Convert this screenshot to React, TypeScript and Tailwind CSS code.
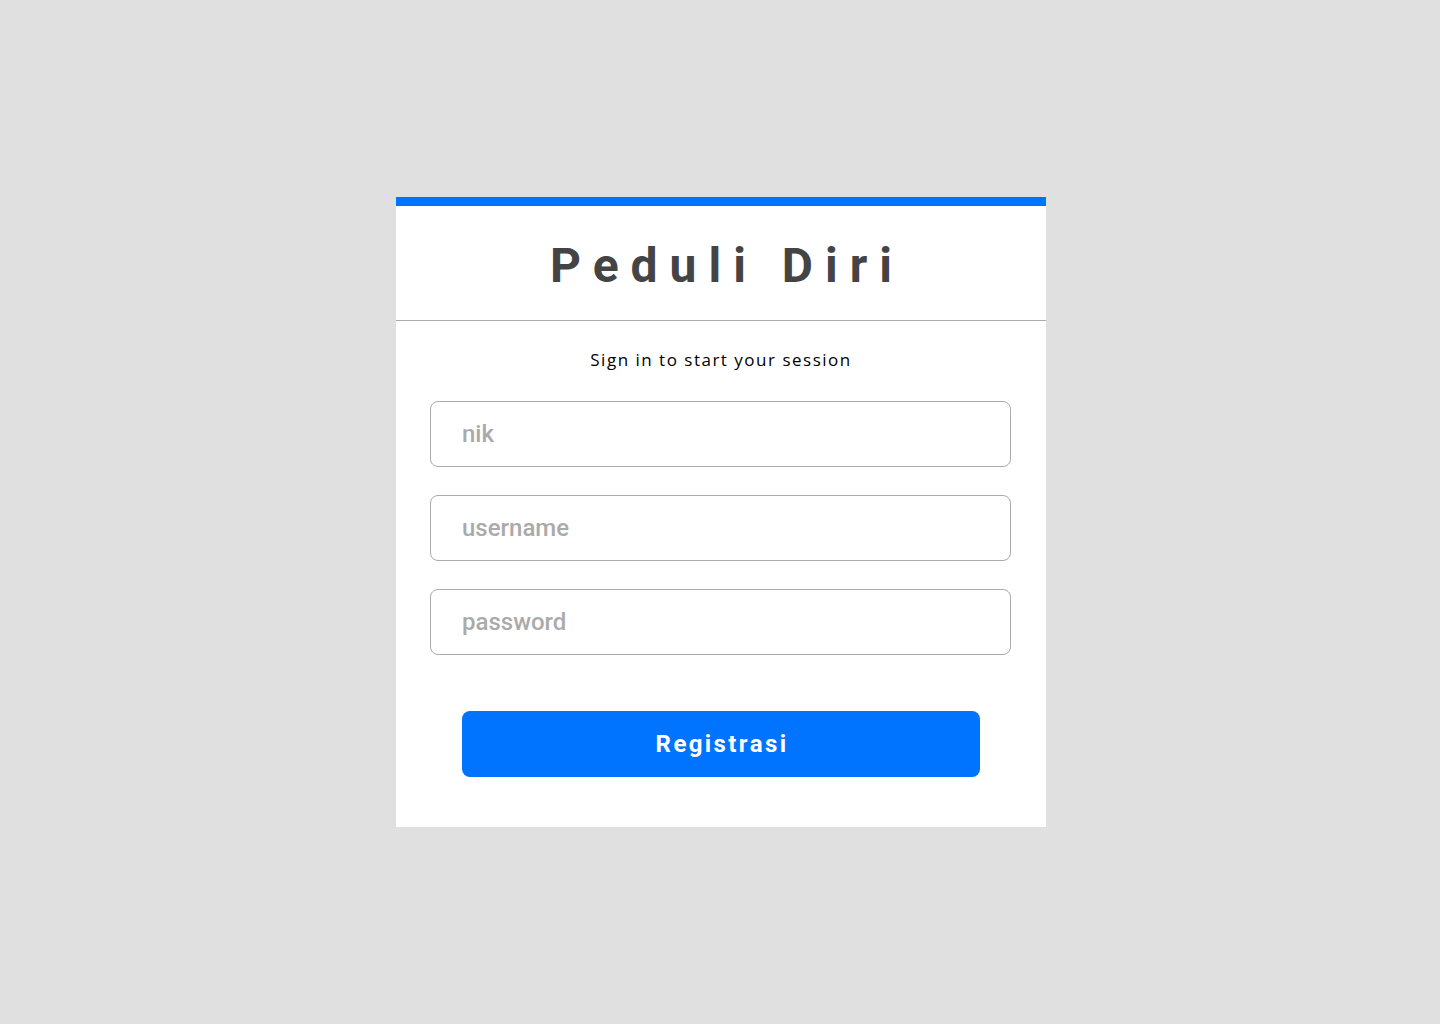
export default function App() {
  return (
    <div className="min-h-screen bg-[#e0e0e0] flex items-start justify-center pt-[197px] pl-[2px]">
      <div className="w-[650px] bg-white border-t-[9px] border-[#0074ff]">
        <div className="h-[115px] flex items-center justify-center border-b border-[#aaaaaa] pt-[5px]">
          <h1
            className="text-[48px] font-bold text-[#444444] tracking-[12px] pl-[12px] leading-none"
            style={{ fontFamily: "Roboto, sans-serif" }}
          >
            Peduli Diri
          </h1>
        </div>

        <div className="px-[34px] pt-[28px] pb-[50px]">
          <p
            className="text-center text-[17px] text-black tracking-[1.5px] leading-[22px]"
            style={{ fontFamily: "'Open Sans', sans-serif" }}
          >
            Sign in to start your session
          </p>

          <form className="mt-[30px] flex flex-col gap-[28px]">
            {["nik", "username", "password"].map((ph) => (
              <input
                key={ph}
                type={ph === "password" ? "password" : "text"}
                placeholder={ph}
                className="w-[581px] h-[66px] rounded-[8px] border border-[#aaaaaa] px-[31px] text-[24px] font-medium text-[#444] placeholder:text-[#aaaaaa] outline-none"
                style={{ fontFamily: "Roboto, sans-serif" }}
              />
            ))}
          </form>

          <div className="mt-[56px] flex justify-center">
            <button
              className="w-[518px] h-[66px] rounded-[8px] bg-[#0074ff] text-white text-[24px] font-bold tracking-[2.4px] pl-[2px]"
              style={{ fontFamily: "Roboto, sans-serif" }}
            >
              Registrasi
            </button>
          </div>
        </div>
      </div>
    </div>
  );
}
